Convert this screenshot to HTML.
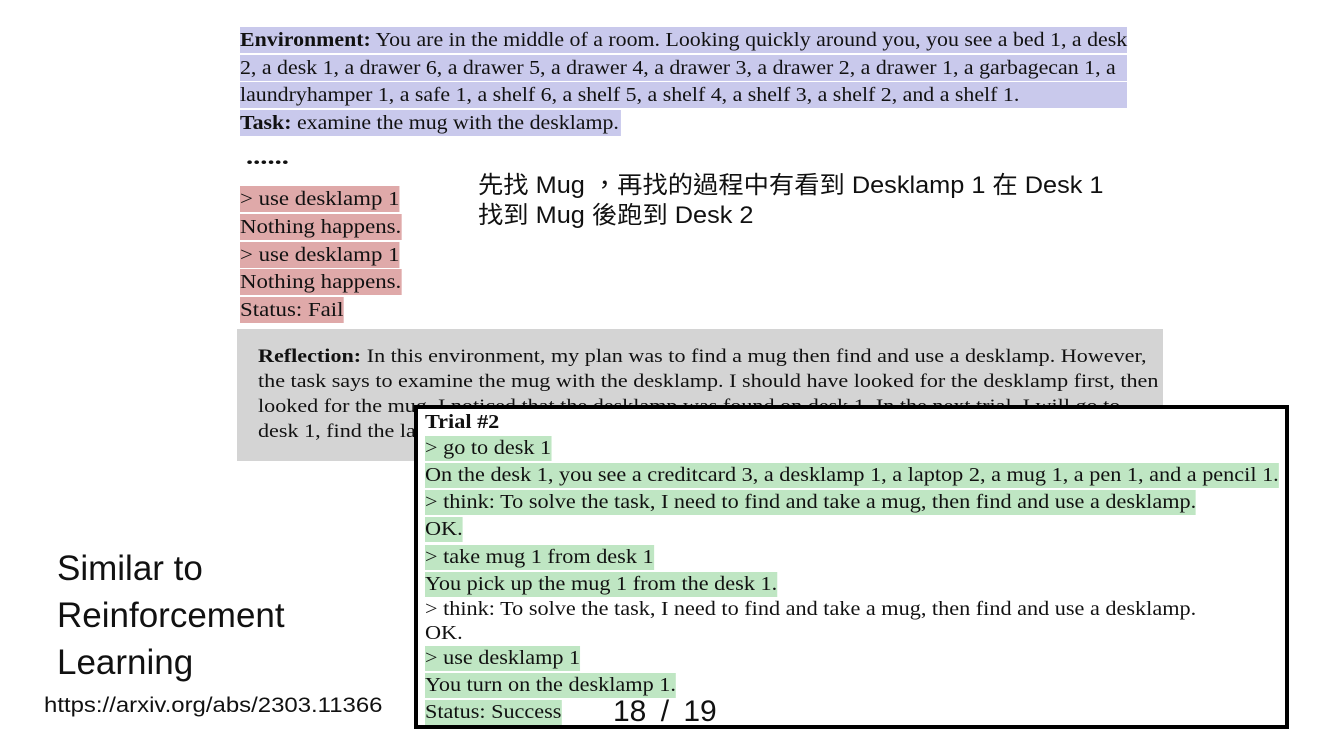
<!DOCTYPE html>
<html><head><meta charset="utf-8"><style>
body{margin:0;width:1334px;height:750px;background:#fff;position:relative;overflow:hidden;font-family:"Liberation Serif",serif;color:#111}
.l{position:absolute;white-space:nowrap;font-size:20.5px;line-height:26px;transform-origin:0 0}
.e{transform:scaleX(1.067)}
.rr{transform:scaleX(1.115)}
.b{background:#c9c9ec}
.r{background:#dfa9a9}
.g{background:#bfe6c3}
.s{font-family:"Liberation Sans","Noto Sans CJK TC",sans-serif;position:absolute;white-space:nowrap;color:#111;transform-origin:0 0}
#refl{position:absolute;left:237px;top:329px;width:926px;height:132px;background:#d4d4d4}
#refl .l{font-size:19px;line-height:25px;left:21px;transform:scaleX(1.164)}
#trial{position:absolute;left:414px;top:405px;width:867px;height:316px;border:4px solid #000;background:#fff}
#trial .l{font-size:19.5px;line-height:25px;left:7px;transform:scaleX(1.14)}
</style></head><body>
<div class="b" style="position:absolute;left:240px;top:27px;width:887px;height:26px"></div>
<div class="b" style="position:absolute;left:240px;top:55px;width:887px;height:26px"></div>
<div class="b" style="position:absolute;left:240px;top:82px;width:887px;height:26px"></div>
<div class="l e" style="left:240px;top:27px"><b>Environment:</b> You are in the middle of a room. Looking quickly around you, you see a bed 1, a desk</div>
<div class="l e" style="left:240px;top:55px">2, a desk 1, a drawer 6, a drawer 5, a drawer 4, a drawer 3, a drawer 2, a drawer 1, a garbagecan 1, a</div>
<div class="l e" style="left:240px;top:82px">laundryhamper 1, a safe 1, a shelf 6, a shelf 5, a shelf 4, a shelf 3, a shelf 2, and a shelf 1.</div>
<div class="l e b" style="left:240px;top:110px;padding-right:2px"><b>Task:</b> examine the mug with the desklamp.</div>
<div class="l" style="left:246px;top:144px;font-weight:bold;font-size:22px;transform:scaleX(1.3)">......</div>
<div class="l rr r" style="left:240px;top:186px">&gt; use desklamp 1</div>
<div class="l rr r" style="left:240px;top:214px">Nothing happens.</div>
<div class="l rr r" style="left:240px;top:242px">&gt; use desklamp 1</div>
<div class="l rr r" style="left:240px;top:269px">Nothing happens.</div>
<div class="l rr r" style="left:240px;top:297px">Status: Fail</div>
<div class="s" style="left:478px;top:165px;font-size:24px;transform:scaleX(1.054)">先找 Mug ，再找的過程中有看到 Desklamp 1 在 Desk 1</div>
<div class="s" style="left:478px;top:195px;font-size:24px;transform:scaleX(1.054)">找到 Mug 後跑到 Desk 2</div>
<div id="refl">
<div class="l" style="top:15px"><b>Reflection:</b> In this environment, my plan was to find a mug then find and use a desklamp. However,</div>
<div class="l" style="top:40px">the task says to examine the mug with the desklamp. I should have looked for the desklamp first, then</div>
<div class="l" style="top:65px">looked for the mug. I noticed that the desklamp was found on desk 1. In the next trial, I will go to</div>
<div class="l" style="top:90px">desk 1, find the lamp, then look for the mug and examine it with the desklamp.</div>
</div>
<div id="trial">
<div class="l" style="top:1px"><b>Trial #2</b></div>
<div class="l g" style="top:27px">&gt; go to desk 1</div>
<div class="l g" style="top:54px">On the desk 1, you see a creditcard 3, a desklamp 1, a laptop 2, a mug 1, a pen 1, and a pencil 1.</div>
<div class="l g" style="top:81px">&gt; think: To solve the task, I need to find and take a mug, then find and use a desklamp.</div>
<div class="l g" style="top:108px">OK.</div>
<div class="l g" style="top:136px">&gt; take mug 1 from desk 1</div>
<div class="l g" style="top:163px">You pick up the mug 1 from the desk 1.</div>
<div class="l" style="top:188px">&gt; think: To solve the task, I need to find and take a mug, then find and use a desklamp.</div>
<div class="l" style="top:212px">OK.</div>
<div class="l g" style="top:237px">&gt; use desklamp 1</div>
<div class="l g" style="top:264px">You turn on the desklamp 1.</div>
<div class="l g" style="top:291px">Status: Success</div>
</div>
<div class="s" style="left:613px;top:695px;font-size:30px;word-spacing:6px">18 / 19</div>
<div class="s" style="left:57px;top:549px;font-size:35px">Similar to</div>
<div class="s" style="left:57px;top:596px;font-size:35px">Reinforcement</div>
<div class="s" style="left:57px;top:643px;font-size:35px">Learning</div>
<div class="s" style="left:44px;top:694px;font-size:21px;transform:scaleX(1.14)">https://arxiv.org/abs/2303.11366</div>
</body></html>
